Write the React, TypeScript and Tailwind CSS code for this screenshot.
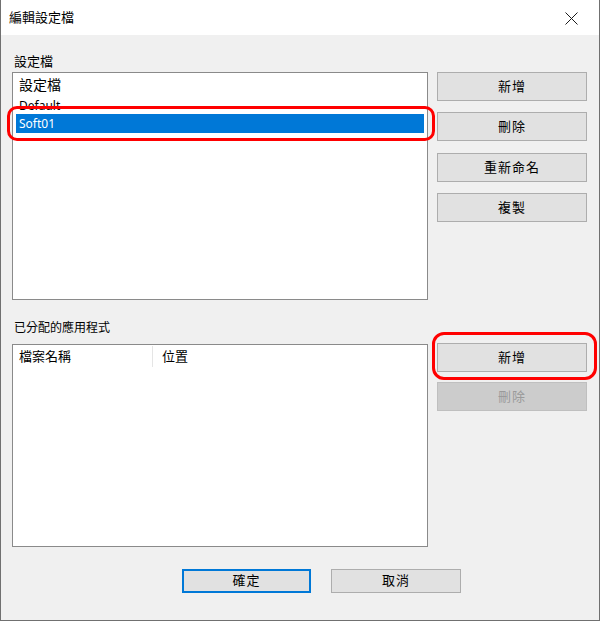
import React from "react";

const font = { fontFamily: '"Noto Sans", "Noto Sans CJK TC", sans-serif' };

function Btn({ label, className = "", disabled = false }: { label: string; className?: string; disabled?: boolean }) {
  return (
    <div
      className={
        "flex h-[29px] w-[150px] items-center justify-center border text-[13px] tracking-[1px] " +
        (disabled
          ? "border-[#bfbfbf] bg-[#cccccc] text-[#9a9a9a] "
          : "border-[#adadad] bg-[#e1e1e1] text-black ") +
        className
      }
    >
      {label}
    </div>
  );
}

export default function App() {
  return (
    <div
      className="relative flex h-[621px] w-[600px] flex-col border-x border-b border-[#707070] bg-[#f0f0f0] text-black"
      style={font}
    >
      {/* title bar */}
      <div className="flex h-[35px] items-center justify-between bg-white pl-[8px] pr-[21px]">
        <span className="text-[13px] leading-none">編輯設定檔</span>
        <svg width="13" height="13" viewBox="0 0 13 13" className="mt-[1px]">
          <path d="M0.5 0.5 L12.5 12.5 M12.5 0.5 L0.5 12.5" stroke="#1a1a1a" strokeWidth="1" fill="none" />
        </svg>
      </div>

      {/* body */}
      <div className="flex flex-1 flex-col pl-[11px] pt-[18px]">
        <div className="mb-[3px] h-[16px] pl-[2px] text-[13px] leading-[16px]">設定檔</div>
        <div className="flex gap-[9px]">
          <div className="flex h-[228px] w-[416px] flex-col border border-[#8a8a8a] bg-white">
            <div className="flex h-[22px] items-center pl-[6px] text-[14px]">設定檔</div>
            <div className="h-[19px] pl-[6px] pt-[4px] text-[12px] leading-[14px]">Default</div>
            <div className="mx-[3px] flex h-[19px] items-center bg-[#0078d7] pl-[3px] text-[12px] text-white">
              Soft01
            </div>
          </div>
          <div className="flex flex-col">
            <Btn label="新增" />
            <Btn label="刪除" className="mt-[11px]" />
            <Btn label="重新命名" className="mt-[12px]" />
            <Btn label="複製" className="mt-[11px]" />
          </div>
        </div>

        <div className="mb-[8px] mt-[20px] h-[16px] pl-[2px] text-[12px] leading-[16px]">已分配的應用程式</div>
        <div className="flex gap-[9px]">
          <div className="flex h-[203px] w-[416px] flex-col border border-[#8a8a8a] bg-white">
            <div className="mt-[1px] flex h-[21px] items-center">
              <div className="flex h-full w-[140px] items-center border-r border-[#e5e5e5] pl-[6px] text-[13px]">
                檔案名稱
              </div>
              <div className="pl-[9px] text-[13px]">位置</div>
            </div>
          </div>
          <div className="-mt-[1px] flex flex-col">
            <Btn label="新增" />
            <Btn label="刪除" disabled className="mt-[10px]" />
          </div>
        </div>

        <div className="ml-[170px] mt-[22px] flex gap-[20px]">
          <div className="flex h-[24px] w-[129px] items-center justify-center border-2 border-[#0078d7] bg-[#e1e1e1] text-[13px] tracking-[1px]">
            確定
          </div>
          <div className="flex h-[24px] w-[130px] items-center justify-center border border-[#adadad] bg-[#e1e1e1] text-[13px] tracking-[1px]">
            取消
          </div>
        </div>
      </div>

      {/* red highlight annotations */}
      <div className="absolute left-[6px] top-[106px] h-[35px] w-[428px] rounded-[10px] border-[3px] border-[#ff0000]" />
      <div className="absolute left-[431px] top-[332px] h-[48px] w-[165px] rounded-[12px] border-[3px] border-[#ff0000]" />
    </div>
  );
}
